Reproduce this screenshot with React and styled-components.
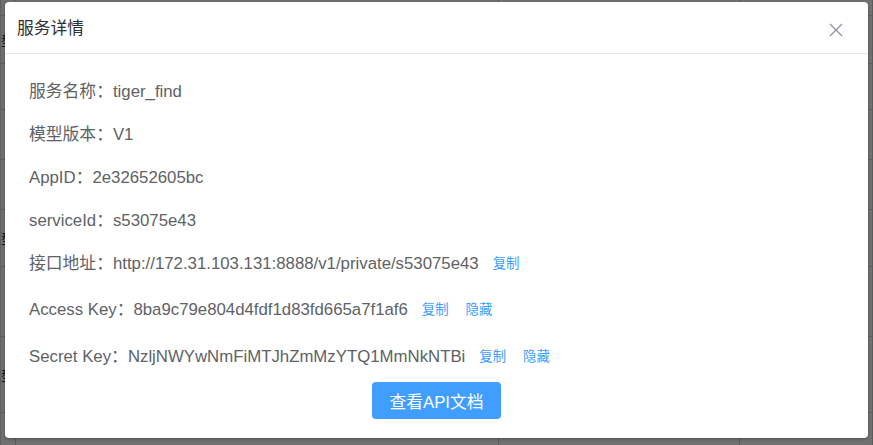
import React from "react";
import styled, { createGlobalStyle } from "styled-components";

const Global = createGlobalStyle`
  html, body { margin: 0; padding: 0; }
  body {
    width: 873px; height: 445px; overflow: hidden;
    font-family: "Liberation Sans", "Noto Sans CJK SC", sans-serif;
    background: #fff;
  }
`;

const Page = styled.div`
  position: relative;
  width: 873px;
  height: 445px;
  overflow: hidden;
  background: #fff;
`;

const BgTable = styled.div`
  display: grid;
  grid-template-columns: 15px 483px 241px 1fr;
  grid-template-rows: 16px 48px 46px 50px 50px 57px 70px 76px 40px;
  border-left: 1px solid #d8d8d8;
`;

const BgCell = styled.div`
  border-bottom: 1px solid #d0d0d0;
  border-right: 1px solid #d0d0d0;
  font-size: 14px;
  color: #333;
  font-family: "Noto Sans CJK SC", sans-serif;
  display: flex;
  align-items: center;
  justify-content: ${(p) => (p.$end ? "flex-end" : "flex-start")};
  overflow: hidden;
  white-space: nowrap;
`;

const Overlay = styled.div`
  position: absolute;
  inset: 0;
  background: rgba(0, 0, 0, 0.56);
`;

const Dialog = styled.div`
  position: absolute;
  left: 5px;
  top: 2px;
  width: 863px;
  height: 436px;
  background: #fff;
  border-radius: 4px;
  box-shadow: 0 1px 3px rgba(0, 0, 0, 0.3);
  display: flex;
  flex-direction: column;
`;

const Header = styled.div`
  height: 51px;
  border-bottom: 1px solid #e8e8e8;
  display: flex;
  align-items: center;
  justify-content: space-between;
  padding: 0 25px 0 12px;
`;

const Title = styled.div`
  font-size: 16.8px;
  color: #303133;
  font-family: "Noto Sans CJK SC", sans-serif;
  margin-top: -2px;
`;

const Close = styled.button`
  border: 0;
  background: none;
  padding: 0;
  width: 14px;
  height: 14px;
  display: flex;
  cursor: pointer;
  margin-top: 4px;
`;

const Body = styled.div`
  padding: 14px 24px 17px 24px;
  display: flex;
  flex-direction: column;
  flex: 1;
`;

const Row = styled.div`
  height: ${(p) => p.$h || 43}px;
  display: flex;
  align-items: center;
  font-size: 16.8px;
  color: #606266;
  white-space: nowrap;
`;

const Links = styled.span`
  display: inline-flex;
  gap: 17px;
  margin-left: 14px;
`;

const Link = styled.a`
  font-size: 13.4px;
  color: #409eff;
  font-family: "Noto Sans CJK SC", sans-serif;
  cursor: pointer;
`;

const Footer = styled.div`
  display: flex;
  justify-content: center;
  margin-top: 5px;
`;

const Button = styled.button`
  width: 129px;
  height: 37px;
  border: 0;
  border-radius: 4px;
  background: #409eff;
  color: #fff;
  font-size: 16.8px;
  font-family: "Liberation Sans", "Noto Sans CJK SC", sans-serif;
  cursor: pointer;
`;

const bgRows = [
  ["", "", "", ""],
  ["型", "", "", ""],
  ["", "", "", "数"],
  ["", "", "", ""],
  ["", "", "", ""],
  ["型", "", "", "l"],
  ["", "", "", "'s"],
  ["型", "", "", ""],
  ["", "", "", ""],
];

const info = [
  { label: "服务名称：", value: "tiger_find" },
  { label: "模型版本：", value: "V1" },
  { label: "AppID：", value: "2e32652605bc" },
  { label: "serviceId：", value: "s53075e43" },
  { label: "接口地址：", value: "http://172.31.103.131:8888/v1/private/s53075e43", links: ["复制"] },
  { label: "Access Key：", value: "8ba9c79e804d4fdf1d83fd665a7f1af6", links: ["复制", "隐藏"], h: 49 },
  { label: "Secret Key：", value: "NzljNWYwNmFiMTJhZmMzYTQ1MmNkNTBi", links: ["复制", "隐藏"], h: 45 },
];

export default function App() {
  return (
    <Page>
      <Global />
      <BgTable>
        {bgRows.map((r, i) =>
          r.map((c, j) => (
            <BgCell key={i + "-" + j} $end={j === 0}>
              {c}
            </BgCell>
          ))
        )}
      </BgTable>
      <Overlay />
      <Dialog>
        <Header>
          <Title>服务详情</Title>
          <Close aria-label="close">
            <svg width="14" height="14" viewBox="0 0 14 14">
              <path d="M1 1 L13 13 M13 1 L1 13" stroke="#909399" strokeWidth="1.3" fill="none" />
            </svg>
          </Close>
        </Header>
        <Body>
          {info.map((it) => (
            <Row key={it.label} $h={it.h}>
              {it.label}
              {it.value}
              {it.links && (
                <Links>
                  {it.links.map((l) => (
                    <Link key={l}>{l}</Link>
                  ))}
                </Links>
              )}
            </Row>
          ))}
          <Footer>
            <Button>查看API文档</Button>
          </Footer>
        </Body>
      </Dialog>
    </Page>
  );
}
